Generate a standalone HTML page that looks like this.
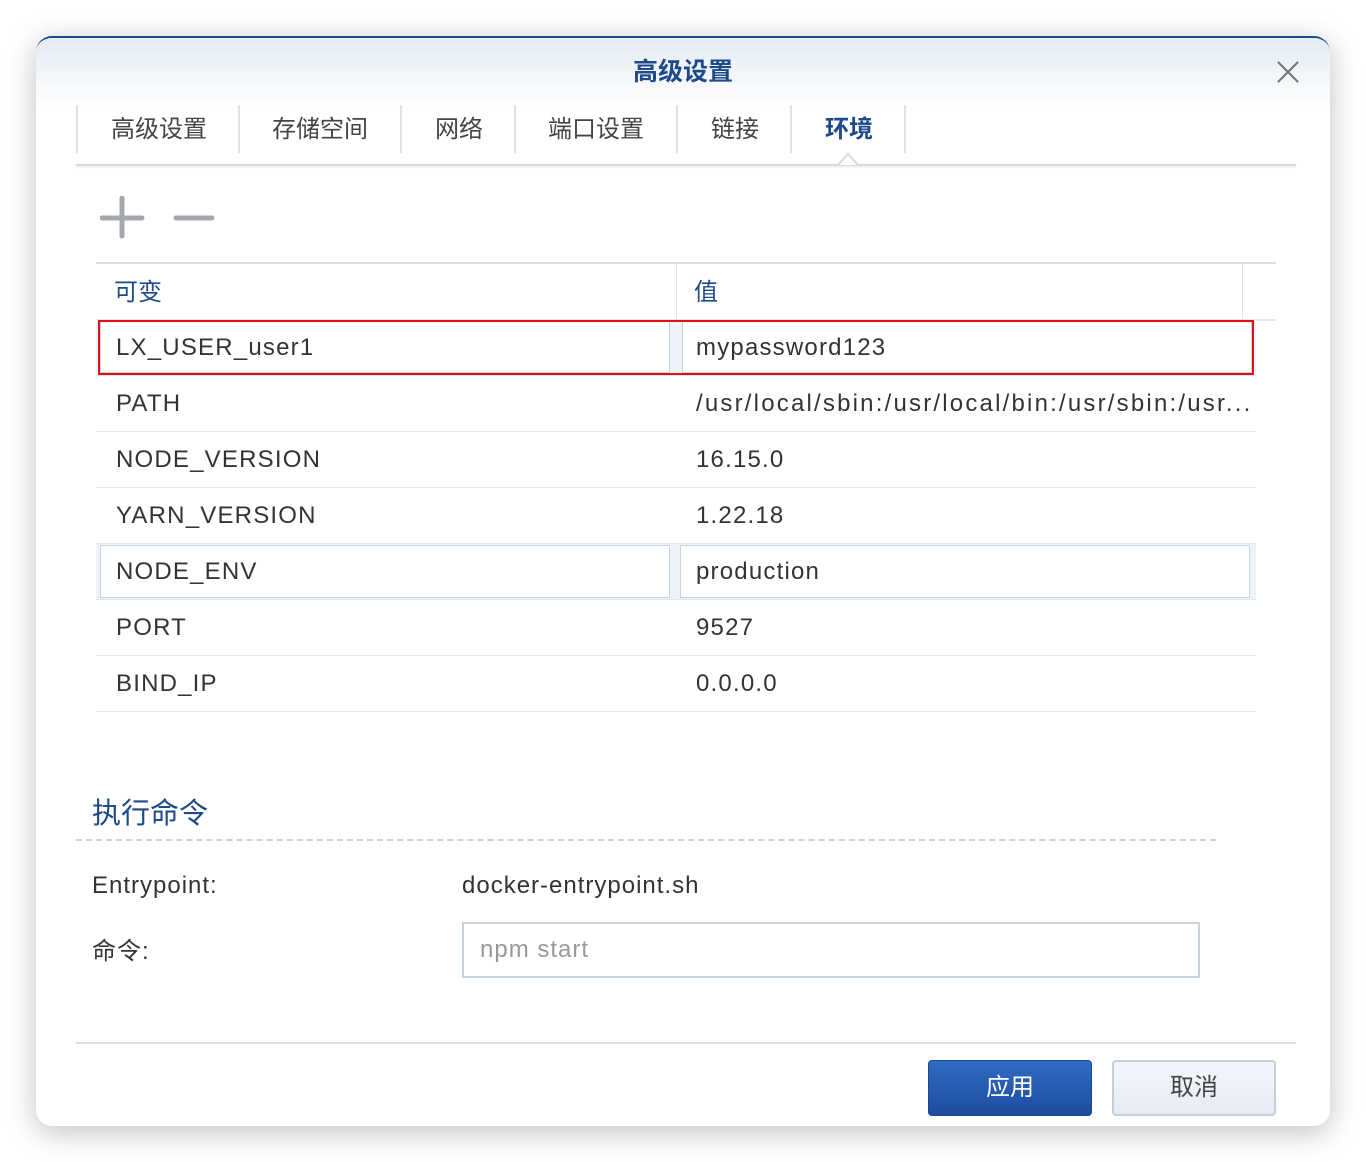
<!DOCTYPE html><html><head><meta charset="utf-8"><style>
body{margin:0;width:1366px;height:1162px;background:#fff;font-family:"Liberation Sans","Noto Sans CJK SC",sans-serif;position:relative;overflow:hidden}
.dlg{position:absolute;left:36px;top:36px;width:1294px;height:1090px;border-radius:16px;background:#fff;box-shadow:0 6px 30px rgba(0,0,0,.25);border-top:2px solid #1d4a8c;box-sizing:border-box;overflow:hidden}
.hdr{position:absolute;left:0;top:0;width:100%;height:70px;background:linear-gradient(#e4ebf3,#fff)}
.a{position:absolute;white-space:nowrap}
.t{font-size:24px;color:#333;letter-spacing:1px}
.tab{position:absolute;top:67px;height:48px;border-left:2px solid #dde2e8;font-size:24px;color:#444;line-height:50px;text-align:center}
.row{position:absolute;left:60px;width:1160px;height:55px;border-bottom:1px solid #e3e6ea;font-size:24px;color:#333;line-height:56px;letter-spacing:1.2px}
.row span{position:absolute}
</style></head><body><div class="dlg">
<div class="hdr"></div>
<div class="a" style="left:0;width:1294px;text-align:center;top:14px;font-size:25px;font-weight:bold;color:#1f4a8a">高级设置</div>
<svg class="a" style="left:1240px;top:22px" width="24" height="24"><path d="M2 2L22 22M22 2L2 22" stroke="#777" stroke-width="2.2"/></svg>
<div class="tab" style="left:40px;width:162px">高级设置</div>
<div class="tab" style="left:202px;width:160px">存储空间</div>
<div class="tab" style="left:364px;width:114px">网络</div>
<div class="tab" style="left:478px;width:160px">端口设置</div>
<div class="tab" style="left:640px;width:114px">链接</div>
<div class="tab" style="left:754px;width:114px;color:#1f4a8a;font-weight:bold">环境</div>
<div class="a" style="left:868px;top:67px;height:48px;border-left:2px solid #dde2e8"></div>
<div class="a" style="left:40px;top:126px;width:1220px;height:2px;background:#d6dade;box-shadow:0 1px 2px rgba(0,0,0,.1)"></div>
<svg class="a" style="left:802px;top:114px" width="20" height="14"><path d="M0 13L10 2L20 13" fill="#fff" stroke="#d6dade" stroke-width="2"/></svg>
<svg class="a" style="left:64px;top:158px" width="120" height="44"><path d="M22 2V40M2 22H42" stroke="#a4a8ad" stroke-width="5" stroke-linecap="round"/><path d="M76 22H112" stroke="#a4a8ad" stroke-width="5" stroke-linecap="round"/></svg>
<div class="a" style="left:60px;top:224px;width:1180px;height:55px;border-top:2px solid #d5dde6;border-bottom:2px solid #e3e6ea"></div>
<div class="a" style="left:640px;top:226px;width:1px;height:55px;background:#dfe4ea"></div>
<div class="a" style="left:1206px;top:226px;width:1px;height:55px;background:#dfe4ea"></div>
<div class="a" style="left:78px;top:234px;font-size:24px;color:#1f4a8a">可变</div>
<div class="a" style="left:658px;top:234px;font-size:24px;color:#1f4a8a">值</div>
<div class="row" style="top:282px;background:#eef3fa"><span style="left:4px;top:1px;width:568px;height:50px;background:#fff;border:1px solid #c5d2e2"></span><span style="left:586px;top:1px;width:568px;height:50px;background:#fff;border:1px solid #c5d2e2"></span><span style="left:2px;top:0;width:1152px;height:51px;border:2px solid #e0101a"></span><span style="left:20px">LX_USER_user1</span><span style="left:600px">mypassword123</span></div>
<div class="row" style="top:338px"><span style="left:20px">PATH</span><span style="left:600px;letter-spacing:2.2px">/usr/local/sbin:/usr/local/bin:/usr/sbin:/usr...</span></div>
<div class="row" style="top:394px"><span style="left:20px">NODE_VERSION</span><span style="left:600px">16.15.0</span></div>
<div class="row" style="top:450px"><span style="left:20px">YARN_VERSION</span><span style="left:600px">1.22.18</span></div>
<div class="row" style="top:506px;background:#eef3fa"><span style="left:4px;top:1px;width:568px;height:51px;background:#fff;border:1px solid #c5d2e2"></span><span style="left:584px;top:1px;width:568px;height:51px;background:#fff;border:1px solid #c5d2e2"></span><span style="left:20px">NODE_ENV</span><span style="left:600px">production</span></div>
<div class="row" style="top:562px"><span style="left:20px">PORT</span><span style="left:600px">9527</span></div>
<div class="row" style="top:618px"><span style="left:20px">BIND_IP</span><span style="left:600px">0.0.0.0</span></div>
<div class="a" style="left:56px;top:752px;font-size:29px;color:#1f4a8a">执行命令</div>
<div class="a" style="left:40px;top:801px;width:1140px;border-top:2px dashed #c9d2dc"></div>
<div class="a t" style="left:56px;top:834px">Entrypoint:</div>
<div class="a t" style="left:426px;top:834px">docker-entrypoint.sh</div>
<div class="a t" style="left:56px;top:893px">命令:</div>
<div class="a" style="left:426px;top:884px;width:734px;height:52px;border:2px solid #c9d2dc;font-size:24px;color:#999;line-height:52px;text-indent:16px;letter-spacing:1px">npm start</div>
<div class="a" style="left:40px;top:1004px;width:1220px;height:2px;background:#ddd"></div>
<div class="a" style="left:892px;top:1022px;width:162px;height:54px;border-radius:4px;background:linear-gradient(#306bc2,#1c4d9e);border:1px solid #1a4590;color:#fff;font-size:24px;text-align:center;line-height:54px">应用</div>
<div class="a" style="left:1076px;top:1022px;width:160px;height:52px;border-radius:4px;background:linear-gradient(#f3f7fd,#e6ebf3);border:2px solid #c5ceda;color:#444;font-size:24px;text-align:center;line-height:52px">取消</div>
</div></body></html>
